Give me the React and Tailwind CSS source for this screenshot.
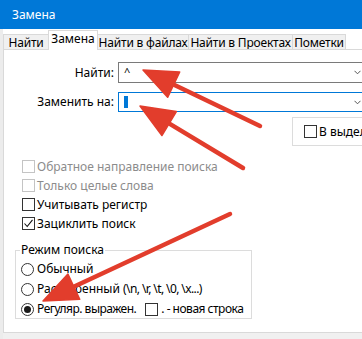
import React from "react";

const Check = ({ checked, disabled }) => (
  <span
    className={`w-[13px] h-[13px] border bg-white flex items-center justify-center shrink-0 ${
      disabled ? "border-[#c4c4c4]" : "border-[#333333]"
    }`}
  >
    {checked && (
      <svg width="11" height="11" viewBox="0 0 11 11">
        <path d="M1.5 5.5 L4.2 8.5 L9.5 1.8" fill="none" stroke="#111" strokeWidth="1.1" />
      </svg>
    )}
  </span>
);

const Radio = ({ on }) => (
  <span className="w-[13px] h-[13px] rounded-full border border-[#333333] bg-white flex items-center justify-center shrink-0">
    {on && <span className="w-[7px] h-[7px] rounded-full bg-[#1a1a1a]" />}
  </span>
);

const Chevron = () => (
  <svg width="7" height="5" viewBox="0 0 7 5">
    <path d="M0.5 0.8 L3.5 3.8 L6.5 0.8" fill="none" stroke="#555" strokeWidth="1" />
  </svg>
);

// red annotation arrow, tail -> tip
const Arrow = ({ x1, y1, x2, y2 }) => {
  const dx = x2 - x1;
  const dy = y2 - y1;
  const len = Math.hypot(dx, dy);
  const ux = dx / len;
  const uy = dy / len;
  const hl = 34;
  const hw = 14;
  const bx = x2 - ux * hl;
  const by = y2 - uy * hl;
  const px = -uy;
  const py = ux;
  const pts = `${x2},${y2} ${bx + px * hw},${by + py * hw} ${bx - px * hw},${by - py * hw}`;
  return (
    <g>
      <line x1={x1} y1={y1} x2={bx + ux * 6} y2={by + uy * 6} stroke="#e23d2c" strokeWidth="4.5" strokeLinecap="round" />
      <polygon points={pts} fill="#e23d2c" stroke="#e23d2c" strokeWidth="1.5" strokeLinejoin="round" />
    </g>
  );
};

const tabs = [
  { label: "Найти", w: "w-[46px]" },
  { label: "Замена", w: "w-[50px]", active: true },
  { label: "Найти в файлах", w: "w-[92px]" },
  { label: "Найти в Проектах", w: "w-[105px]" },
  { label: "Пометки", w: "w-[54px]" },
];

const App = () => {
  return (
    <div className="relative w-[362px] h-[339px] overflow-hidden bg-white font-['Noto_Sans',sans-serif] text-[12px] leading-none text-black flex flex-col">
      <div className="h-[29px] bg-[#0078d7] text-white flex items-center pl-[12px] shrink-0">Замена</div>

      <div className="flex flex-1">
        <div className="w-[3px] bg-[#ececec] shrink-0" />
        <div className="flex-1 flex flex-col">
          <div className="h-[21px] flex items-end shrink-0">
            {tabs.map((t, i) =>
              t.active ? (
                <div
                  key={i}
                  className={`${t.w} h-[20px] relative z-10 -ml-px bg-white border-t border-l border-r border-[#d9d9d9] flex items-center justify-center whitespace-nowrap pb-[3px]`}
                >
                  {t.label}
                </div>
              ) : (
                <div
                  key={i}
                  className={`${t.w} h-[16px] ${i === 0 ? "" : "-ml-px"} bg-[#f0f0f0] border-t border-l border-r border-[#d9d9d9] flex items-center justify-center whitespace-nowrap tracking-[-0.2px]`}
                >
                  {t.label}
                </div>
              )
            )}
          </div>

          <div className="-mt-px h-[284px] w-[370px] border-t border-l border-b border-[#d9d9d9] bg-white shrink-0 flex flex-col">
            <div className="mt-[12px] flex items-center h-[21px]">
              <div className="w-[110px] text-right">Найти:</div>
              <div className="ml-[4px] w-[250px] h-[21px] border border-[#7a7a7a] flex items-center justify-between pl-[5px] pr-[6px]">
                <span className="text-[11px] -mt-[2px]">^</span>
                <Chevron />
              </div>
            </div>

            <div className="mt-[9px] flex items-center h-[20px]">
              <div className="w-[110px] text-right">Заменить на:</div>
              <div className="ml-[4px] w-[250px] h-[20px] border border-[#0078d7] flex items-center justify-between pl-[5px] pr-[6px]">
                <span className="w-[4px] h-[12px] bg-[#0078d7]" />
                <Chevron />
              </div>
            </div>

            <div className="mt-[5px] ml-[288px] w-[100px] h-[29px] border border-[#dcdcdc] flex items-center pl-[11px] gap-[2px]">
              <Check />
              <span className="whitespace-nowrap">В выделенном</span>
            </div>

            <div className="mt-[11px] flex flex-col pl-[18px]">
              <div className="h-[19px] flex items-center gap-[2px] text-[#8c8c8c]">
                <Check disabled />
                <span className="whitespace-nowrap">Обратное направление поиска</span>
              </div>
              <div className="h-[19px] flex items-center gap-[2px] text-[#8c8c8c]">
                <Check disabled />
                <span>Только целые слова</span>
              </div>
              <div className="h-[19px] flex items-center gap-[2px]">
                <Check />
                <span>Учитывать регистр</span>
              </div>
              <div className="h-[19px] flex items-center gap-[2px]">
                <Check checked />
                <span>Зациклить поиск</span>
              </div>
            </div>

            <fieldset className="mt-[9px] ml-[11px] w-[237px] h-[77px] border border-[#dcdcdc] pl-[5px]">
              <legend className="ml-[-1px] px-[1px] h-[16px] leading-[16px]">Режим поиска</legend>
              <div className="flex flex-col pt-px">
                <div className="h-[20px] flex items-center gap-[3px]">
                  <Radio />
                  <span>Обычный</span>
                </div>
                <div className="h-[20px] flex items-center gap-[3px]">
                  <Radio />
                  <span className="whitespace-nowrap">
                    Расширенный <span className="tracking-[-0.6px]">(\n, \r, \t, \0, \x...)</span>
                  </span>
                </div>
                <div className="h-[20px] flex items-center">
                  <Radio on />
                  <span className="ml-[3px] whitespace-nowrap tracking-[-0.5px]">Регуляр. выражен.</span>
                  <span className="ml-[9px]">
                    <Check />
                  </span>
                  <span className="ml-[3px] whitespace-nowrap tracking-[-0.5px]">. - новая строка</span>
                </div>
              </div>
            </fieldset>
          </div>

          <div className="flex-1 bg-[#f0f0f0]" />
        </div>
      </div>

      <svg className="absolute inset-0 z-20 pointer-events-none" width="362" height="339" viewBox="0 0 362 339">
        <Arrow x1={260} y1={126} x2={143} y2={70} />
        <Arrow x1={243} y1={168} x2={140} y2={106} />
        <Arrow x1={230} y1={214} x2={43} y2={301} />
      </svg>
    </div>
  );
};

export default App;
